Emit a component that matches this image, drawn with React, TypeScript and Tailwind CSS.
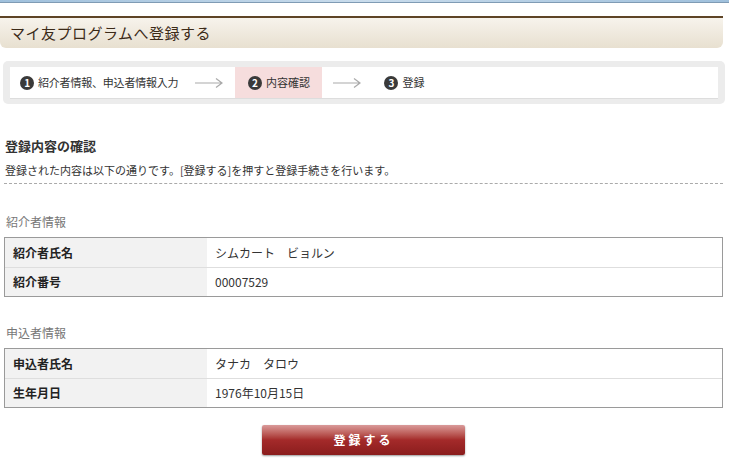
import React from "react";

const jp = { fontFamily: '"Noto Sans CJK JP", "Noto Sans", sans-serif' };

function StepNum({ n }: { n: number }) {
    return (
        <span className="inline-flex h-[14px] w-[14px] items-center justify-center rounded-full bg-[#3a3a3a] text-[10px] font-bold leading-none text-white">
            {n}
        </span>
    );
}

function Arrow({ className }: { className: string }) {
    return (
        <svg width="28" height="12" viewBox="0 0 28 12" className={className}>
            <path d="M0 6H27M21 1.5L27 6L21 10.5" fill="none" stroke="#aaa" strokeWidth="1.2" />
        </svg>
    );
}

function InfoTable({ rows }: { rows: [string, string][] }) {
    return (
        <div className="border border-[#9a9a9a]">
            {rows.map(([k, v], i) => (
                <div key={k} className={`flex h-[29px] ${i > 0 ? "border-t border-[#dedede]" : ""}`}>
                    <div className="flex w-[202px] items-center bg-[#f2f2f2] pl-[8px] text-[12px] font-bold text-[#222]">{k}</div>
                    <div className="flex flex-1 items-center pl-[8px] text-[12px] text-[#333]">{v}</div>
                </div>
            ))}
        </div>
    );
}

export default function App() {
    return (
        <div className="h-[468px] w-[729px] overflow-hidden bg-white" style={jp}>
            <div className="h-[3px] bg-gradient-to-r from-[#9fc0dc] via-[#c9dcec] to-[#9fc0dc] border-b border-[#7f9bb4]" />

            <div className="mt-[13px] pr-[6px]">
                <div className="h-[2px] bg-[#5e4426]" />
                <div className="flex h-[30px] items-center rounded-b-[6px] bg-gradient-to-b from-[#f7f3ec] to-[#e8e0d0] pl-[10px]">
                    <span className="text-[15px] tracking-[0.5px] text-[#3b2a18]" style={{ fontFamily: '"Noto Sans CJK JP", serif' }}>
                        マイ友プログラムへ登録する
                    </span>
                </div>
            </div>

            <div className="mx-[3px] mt-[13px] w-[722px] rounded-[5px] bg-[#ececec] px-[7px] py-[6px]">
                <div className="flex h-[31px] items-center bg-white shadow-[0_1px_0_#ddd]">
                    <div className="flex items-center gap-[4px] pl-[10px] text-[11px] tracking-[-0.2px] text-[#333]">
                        <StepNum n={1} />
                        <span>紹介者情報、申込者情報入力</span>
                    </div>
                    <Arrow className="ml-[17px] mr-[12px]" />
                    <div className="flex h-full w-[87px] items-center justify-center gap-[4px] bg-[#f6dddd] text-[11px] text-[#333]">
                        <StepNum n={2} />
                        <span>内容確認</span>
                    </div>
                    <Arrow className="ml-[11px] mr-[23px]" />
                    <div className="flex items-center gap-[4px] text-[11px] text-[#333]">
                        <StepNum n={3} />
                        <span>登録</span>
                    </div>
                </div>
            </div>

            <div className="px-[4px] pr-[6px]">
                <h2 className="mt-[33px] pl-[1px] text-[13px] font-bold leading-[18px] text-[#333]">登録内容の確認</h2>
                <p className="mt-[7px] pl-[1px] text-[11px] leading-[16px] text-[#333]">
                    登録された内容は以下の通りです。[登録する]を押すと登録手続きを行います。
                </p>
                <div className="mt-[5px] border-t border-dashed border-[#aaa]" />

                <div className="mt-[30px] pl-[2px] text-[12px] leading-[16px] text-[#777]">紹介者情報</div>
                <div className="mt-[7px]">
                    <InfoTable rows={[["紹介者氏名", "シムカート　ビョルン"], ["紹介番号", "00007529"]]} />
                </div>

                <div className="mt-[28px] pl-[2px] text-[12px] leading-[16px] text-[#777]">申込者情報</div>
                <div className="mt-[7px]">
                    <InfoTable rows={[["申込者氏名", "タナカ　タロウ"], ["生年月日", "1976年10月15日"]]} />
                </div>

                <div className="mt-[17px] flex justify-center">
                    <button className="h-[30px] w-[203px] rounded-[2px] bg-gradient-to-b from-[#d99a9a] via-[#a42a2a] to-[#8a1d1d] text-[12px] font-bold tracking-[3px] text-white shadow-[0_1px_2px_rgba(0,0,0,0.4)]">
                        登録する
                    </button>
                </div>
            </div>
        </div>
    );
}
